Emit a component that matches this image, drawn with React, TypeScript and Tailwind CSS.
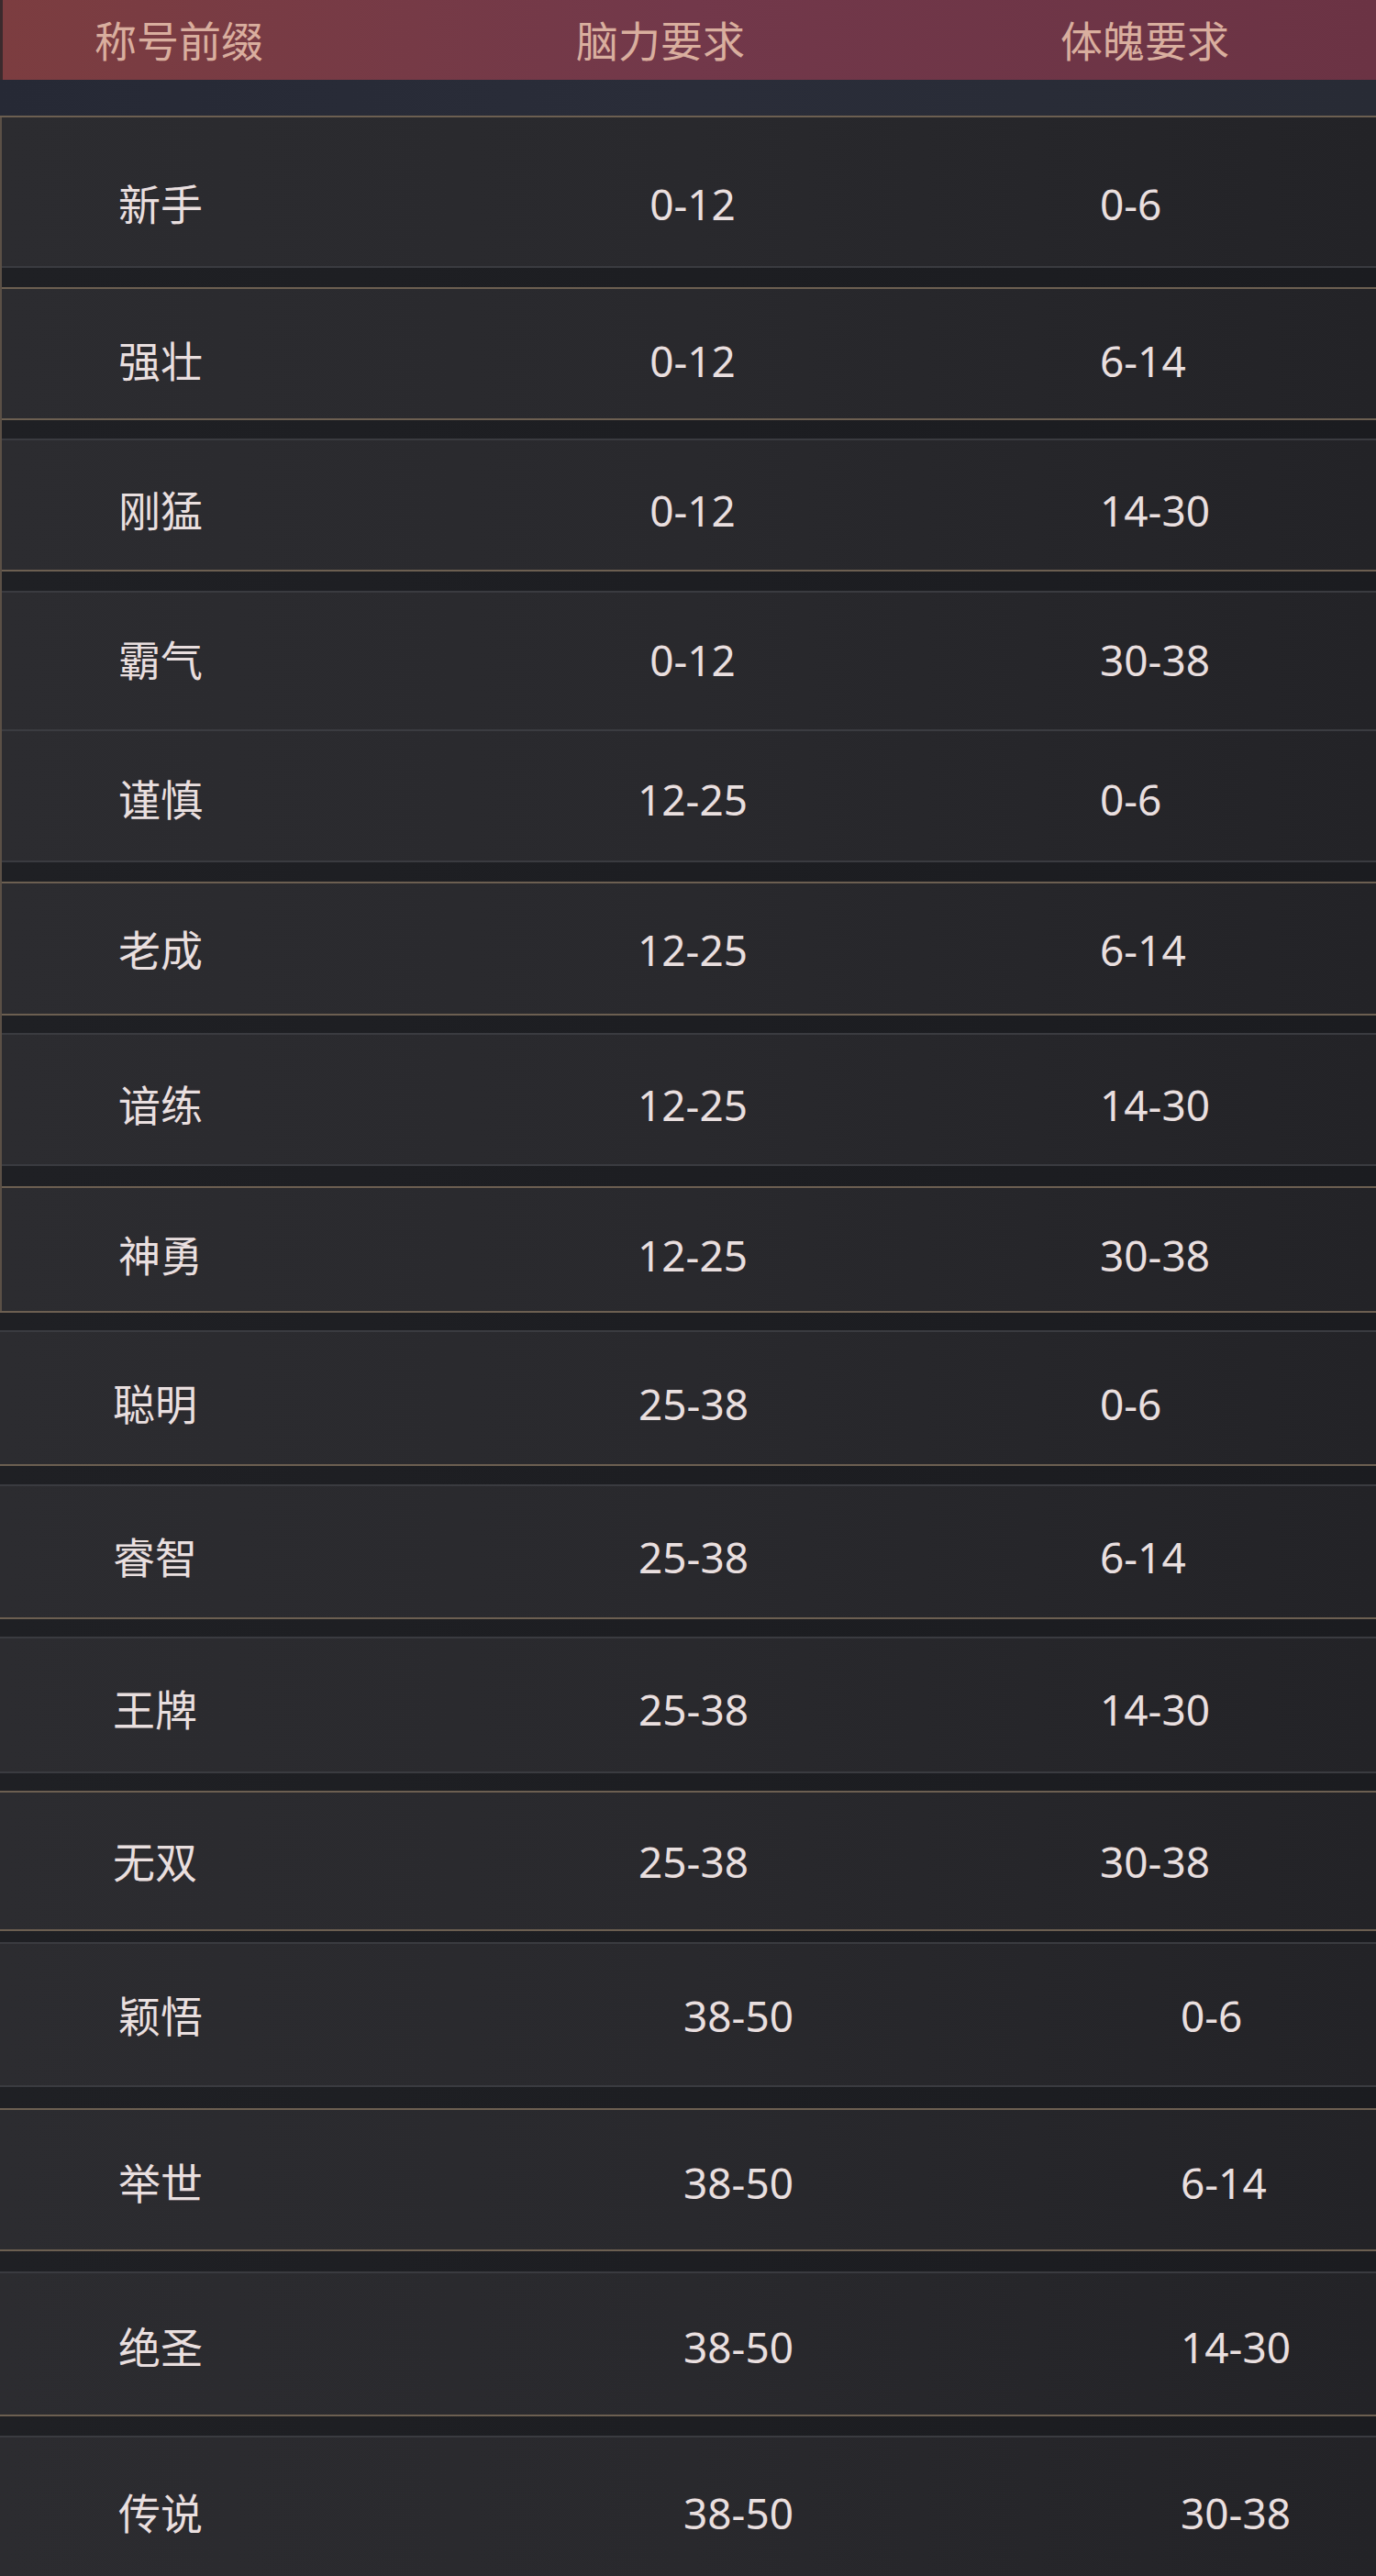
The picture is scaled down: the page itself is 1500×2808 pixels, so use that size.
import React from "react";

type Sep = "g" | "f" | "fbg" | "gbf";

interface Row {
  name: string
  brain: string
  body: string
  h: string
  pad: string
  sec: "a" | "b" | "c"
  sep?: Sep
  sepH?: string
}

// rows in the order they appear, with the divider drawn under each one
const rows: Row[] = [
  { name: "新手", brain: "0-12", body: "0-6", h: "h-[162px]", pad: "pt-[26px]", sec: "a", sep: "fbg", sepH: "h-[25px]" },
  { name: "强壮", brain: "0-12", body: "6-14", h: "h-[141px]", pad: "pt-[14px]", sec: "a", sep: "gbf", sepH: "h-[24px]" },
  { name: "刚猛", brain: "0-12", body: "14-30", h: "h-[141px]", pad: "pt-[10px]", sec: "a", sep: "gbf", sepH: "h-[25px]" },
  { name: "霸气", brain: "0-12", body: "30-38", h: "h-[149px]", pad: "pb-[4px]", sec: "a", sep: "f", sepH: "h-[2px]" },
  { name: "谨慎", brain: "12-25", body: "0-6", h: "h-[141px]", pad: "pt-[6px]", sec: "a", sep: "fbg", sepH: "h-[25px]" },
  { name: "老成", brain: "12-25", body: "6-14", h: "h-[142px]", pad: "pt-[2px]", sec: "a", sep: "gbf", sepH: "h-[23px]" },
  { name: "谙练", brain: "12-25", body: "14-30", h: "h-[141px]", pad: "pt-[10px]", sec: "a", sep: "fbg", sepH: "h-[26px]" },
  { name: "神勇", brain: "12-25", body: "30-38", h: "h-[134px]", pad: "pt-[12px]", sec: "a" },
  { name: "聪明", brain: "25-38", body: "0-6", h: "h-[144px]", pad: "pt-[12px]", sec: "b", sep: "gbf", sepH: "h-[24px]" },
  { name: "睿智", brain: "25-38", body: "6-14", h: "h-[143px]", pad: "pt-[10px]", sec: "b", sep: "gbf", sepH: "h-[23px]" },
  { name: "王牌", brain: "25-38", body: "14-30", h: "h-[145px]", pad: "pt-[8px]", sec: "b", sep: "fbg", sepH: "h-[23px]" },
  { name: "无双", brain: "25-38", body: "30-38", h: "h-[149px]", pad: "", sec: "b", sep: "gbf", sepH: "h-[16px]" },
  { name: "颖悟", brain: "38-50", body: "0-6", h: "h-[154px]", pad: "pt-[2px]", sec: "c", sep: "fbg", sepH: "h-[27px]" },
  { name: "举世", brain: "38-50", body: "6-14", h: "h-[152px]", pad: "pt-[6px]", sec: "c", sep: "gbf", sepH: "h-[26px]" },
  { name: "绝圣", brain: "38-50", body: "14-30", h: "h-[154px]", pad: "pt-[6px]", sec: "c", sep: "gbf", sepH: "h-[25px]" },
  { name: "传说", brain: "38-50", body: "30-38", h: "h-[151px]", pad: "pt-[12px]", sec: "c" },
];

const cols = {
  a: { c1: "w-[603px] pl-[127px]", c3: "pl-[294px]" },
  b: { c1: "w-[606px] pl-[123px]", c3: "pl-[293px]" },
  c: { c1: "w-[655px] pl-[129px]", c3: "pl-[332px]" },
};

const Divider = ({ type, h }: { type: Sep; h: string }) => {
  if (type === "f") return <div className={`${h} bg-[#3b3c41]`} />;
  if (type === "g") return <div className={`${h} bg-[#6c5f51]`} />;
  if (type === "fbg")
    return (
      <div className={`${h} flex flex-col`}>
        <div className="h-[2px] bg-[#3a3b40]" />
        <div className="flex-1 bg-gradient-to-r from-[#1f2024] to-[#1b1c20]" />
        <div className="h-[2px] bg-[#6c5f51]" />
      </div>
    );
  return (
    <div className={`${h} flex flex-col`}>
      <div className="h-[2px] bg-[#6c5f51]" />
      <div className="flex-1 bg-gradient-to-r from-[#1f2024] to-[#1b1c20]" />
      <div className="h-[2px] bg-[#3a3b40]" />
    </div>
  );
};

const TableRow = ({ r }: { r: Row }) => {
  const c = cols[r.sec];
  return (
    <div className={`${r.h} ${r.pad} flex items-center bg-gradient-to-r from-[#2c2c30] via-[#29292d] to-[#232327] text-[#e9dfdf]`}>
      <div className={`${c.c1} shrink-0 text-[46px] leading-none`}>{r.name}</div>
      <div className="w-[300px] shrink-0 text-center text-[46px] leading-none">{r.brain}</div>
      <div className={`${c.c3} text-[46px] leading-none`}>{r.body}</div>
    </div>
  );
};

export default function App() {
  const first = rows.filter((r) => r.sec === "a");
  const rest = rows.filter((r) => r.sec !== "a");

  return (
    <div className="w-[1500px] h-[2808px] overflow-hidden bg-[#232327] font-['Noto_Sans','Noto_Sans_CJK_SC',sans-serif]">
      {/* header */}
      <div className="h-[87px] flex items-center border-l-[3px] border-[#3b2a2d] bg-gradient-to-r from-[#7c3d40] via-[#72384a] to-[#6b3344] text-[#d9ae9e] text-[46px] leading-none">
        <div className="w-[567px] shrink-0 pl-[100px]">称号前缀</div>
        <div className="w-[300px] shrink-0 text-center">脑力要求</div>
        <div className="w-[228px] shrink-0" />
        <div className="w-[300px] shrink-0 text-center">体魄要求</div>
      </div>
      <div className="h-[39px] bg-gradient-to-r from-[#262935] via-[#2a2d39] to-[#282b35]" />
      <Divider type="g" h="h-[2px]" />

      <div className="border-l-2 border-[#5b5046]">
        {first.map((r) => (
          <React.Fragment key={r.name}>
            <TableRow r={r} />
            {r.sep && <Divider type={r.sep} h={r.sepH!} />}
          </React.Fragment>
        ))}
      </div>
      <Divider type="gbf" h="h-[23px]" />

      {rest.map((r) => (
        <React.Fragment key={r.name}>
          <TableRow r={r} />
          {r.sep && <Divider type={r.sep} h={r.sepH!} />}
        </React.Fragment>
      ))}
    </div>
  );
}
